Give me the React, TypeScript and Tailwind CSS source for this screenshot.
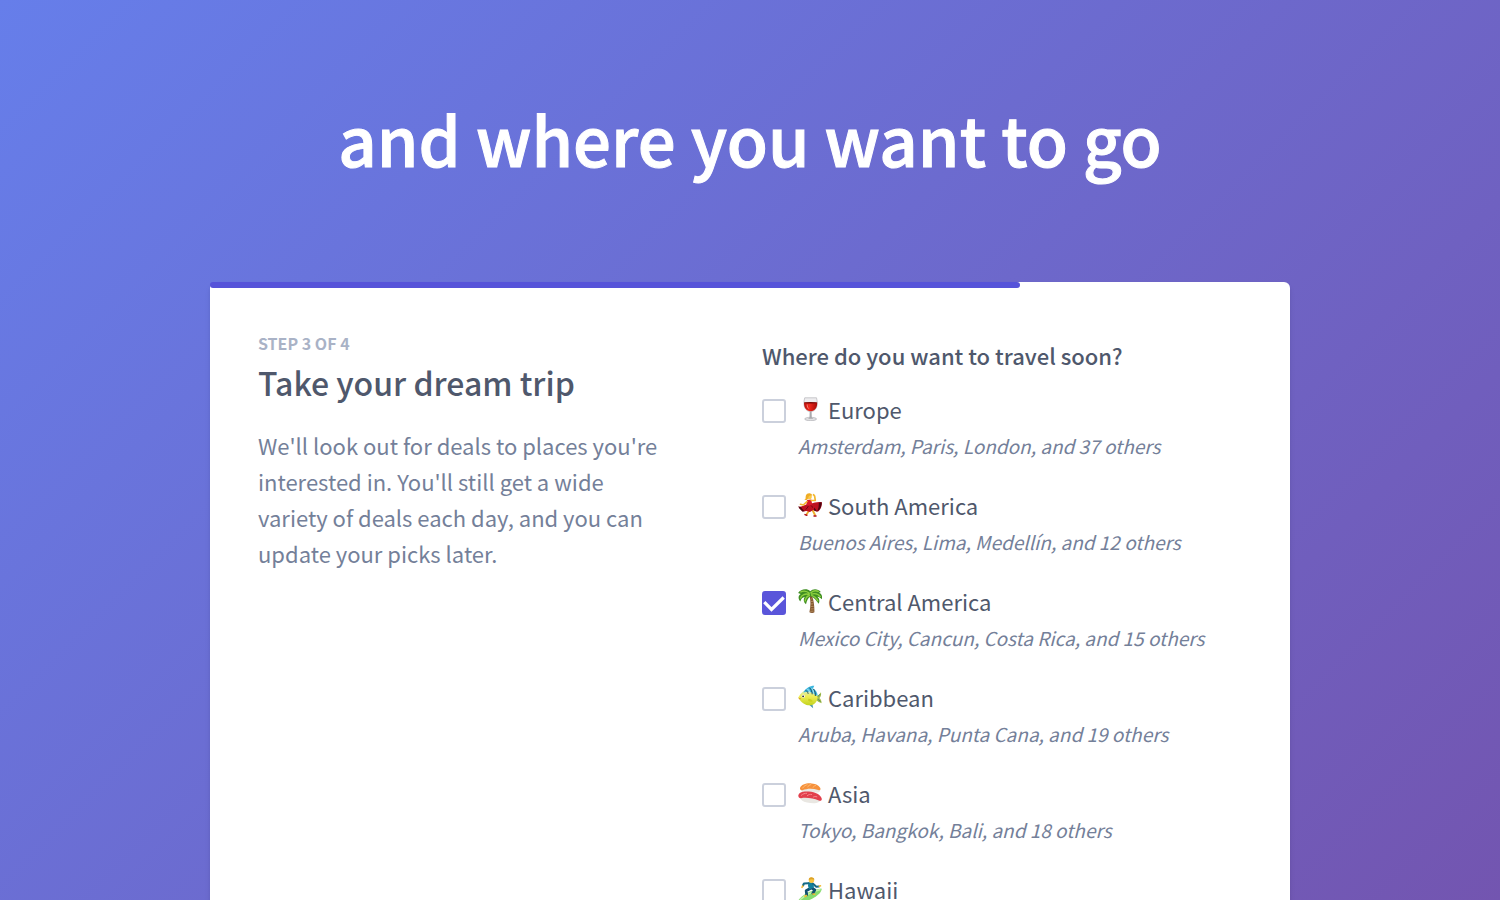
import { useState } from "react";
import type { ReactNode } from "react";

const icon = "h-6 w-6 shrink-0";

function Wine() {
  return (
    <svg className={icon} viewBox="0 0 24 24" aria-hidden="true">
      <defs>
        <linearGradient id="wine" x1="0" x2="1">
          <stop offset="0" stopColor="#b5110d" />
          <stop offset=".4" stopColor="#f0281c" />
          <stop offset="1" stopColor="#a50b08" />
        </linearGradient>
      </defs>
      <ellipse cx="12.600" cy="22" rx="6" ry="1.700" fill="#e0e0e2" stroke="#aaaaae" strokeWidth=".6" />
      <path d="M11.700 14h1.900l.2 6.500 1.700 1.200H10l1.500-1.200z" fill="#a9a9ad" />
      <path d="M6.700.8h11.800c1.100 4 1 7.700-.1 9.900-1.100 2.300-3.200 3.900-5.800 3.900s-4.700-1.600-5.800-3.900C5.700 8.500 5.700 4.800 6.700.8z" fill="#eeedef" stroke="#b4b4b9" strokeWidth=".7" />
      <path d="M6 5.600h13.200c.2 5.200-2.300 8.700-6.600 8.700S5.800 10.800 6 5.600z" fill="url(#wine)" />
      <ellipse cx="12.600" cy="5.700" rx="6.500" ry=".8" fill="#7c0c09" />
      <path d="M9.200 7.500c0 2 .5 3.200 1.500 4.100" stroke="#ff8175" strokeWidth="1" fill="none" />
    </svg>
  );
}

function Dancer() {
  return (
    <svg className={icon} viewBox="0 0 24 24" aria-hidden="true">
      <path d="M11.500 17l-3 4.500M14 16l3 6" stroke="#eeb02e" strokeWidth="1.900" strokeLinecap="round" />
      <path d="M7 21.600l1.800.7M16 23h2" stroke="#b0101d" strokeWidth="1.500" strokeLinecap="round" />
      <path d="M8.300 11.500L13.500 10.500c2.500-1 6.500-2 10.300-1.300.3 3.500-1 7.300-3.700 9.300-2.200.1-3.600-.7-4.900-1.500L12 19l-3.500-1-4 .4C3 17 1.300 15.800.3 13.600c1.700.4 3 .1 4.200-.6z" fill="#bd1020" />
      <path d="M19 18.600c3-1.500 4.700-5.500 4.800-9.400l-3 .5c.2 3.300-.4 6.300-1.800 8.900zM.3 13.600c1 2.200 2.700 3.400 4.200 4.800l2.200-.2c-2-1.500-2.900-2.800-3.700-4.300zM16 14.500c1.300 1 2 2.300 3 3.900l-3-1z" fill="#500511" />
      <path d="M7.500 16.500c1.300-.7 2.200-1.900 2.800-3.400M15 14.500c-.9-.6-1.500-1.200-2.100-2" stroke="#6e0815" strokeWidth="1" fill="none" />
      <path d="M9 6.900l4.300-.4.900 4.700c-1.800 1.500-3.900 1.800-5.900.6z" fill="#d81a2b" />
      <path d="M9 8.500L5.300 12l-2.800-.7M13.300 7.500l4-.2-.7-4.300-1-1.300" stroke="#f3b72f" strokeWidth="1.700" strokeLinecap="round" strokeLinejoin="round" fill="none" />
      <circle cx="11.300" cy="3.700" r="2.500" fill="#fbca45" />
      <path d="M6.300 6.900C8.300 6.300 7.300 4.300 7.900 2.500 8.600.5 10.500 0 12.100.4c1.500.3 2.300 1.300 2.100 2.300-2-.5-3.300 0-3.900 1.700-.3 1.900-1.700 3.100-4 2.500z" fill="#efac25" />
    </svg>
  );
}

function Palm() {
  return (
    <svg className={icon} viewBox="0 0 24 24" aria-hidden="true">
      <path d="M11.500 7c1.300 4.500 1.300 10-.1 16.300 1.300.9 4 .9 5 0 .1-6-.5-11.300-2.300-16.300z" fill="#83562f" />
      <path d="M12.800 10l1.800-.2M13 12.500l2.100-.2M13 15l2.400-.2M12.700 17.500l3-.2M12.500 20l3.300-.2M12.200 22.300l3.500-.2" stroke="#c29a67" strokeWidth=".8" />
      <path d="M12.600 7.200C10.300 8.500 8.900 11.500 8 15.200 5.300 13 5.200 10.300 6.700 8 4.600 8.300 3 9.800 2.300 12.500-.2 9.700.1 6.500 2.700 4.900L.1 4.100C3-.3 9.300-.8 12.200 2.300 14.800-.6 20-.6 22.800 3.100l-1.900.7c2.700 1 3.900 3.500 2.800 6.500-1.200-1.500-2.700-2.300-4.300-2.500 2.100 1.800 2.500 4.100 1.300 7-2.300-3.300-4.500-6.600-8.100-7.600z" fill="#3f8e22" />
      <path d="M11.700 4.500C8.500 1.700 5 1.700 2.300 3.200M11.500 5.500C7.500 4.300 3.500 5.500 2.300 9.500M11.900 6.300C8.700 7 7.500 9.300 7 12.500M12.500 4.200c2.200-2.600 5.200-3.200 8.200-1.500M13 5.300c3.600-1.600 7.500-.3 9.500 2.700M13.300 6.300c3.500 1 5.500 3.300 6.700 6" stroke="#8fd03f" strokeWidth="1.400" fill="none" />
    </svg>
  );
}

function Fish() {
  return (
    <svg className={icon} viewBox="0 0 24 24" aria-hidden="true">
      <defs>
        <linearGradient id="fish" x1="0" y1="0" x2="0" y2="1">
          <stop offset="0" stopColor="#d4eadb" />
          <stop offset=".45" stopColor="#efee52" />
          <stop offset="1" stopColor="#c3d320" />
        </linearGradient>
      </defs>
      <path d="M17.500 11.500c2.300-.6 4-2 5.500-4.300.4 2.600-.2 4.500-1.600 5.800 1.500 1.200 2.200 2.800 2.200 5.300-2.300-.8-4.500-2.200-6.200-4z" fill="#a5bd47" />
      <path d="M19 12.300l3.300-3.300M19 13.500l3.500 3" stroke="#397b78" strokeWidth=".8" />
      <path d="M9.500 18.500l5.700 4.700-.8-4z" fill="#4b98aa" />
      <path d="M.2 12.700C3 7 7.500 3.700 12.300 4.200c4.300.6 7.200 4.200 7.400 8.700-.8 4.500-3.800 7.200-8 7.400-4.500 0-8-2.400-11.500-7.600z" fill="url(#fish)" />
      <path d="M5.300 7.500C8 3 11.500.7 16.300.7L15 3.500c2.900 1.500 4.500 4 4.700 7.500l-2.800-1.200c-3-3-7-3.700-11.600-2.300z" fill="#3db7df" />
      <path d="M7.500 5.300c1.500.5 2.300 2 2.700 3.500M11.500 2.700c1.800 2 2.600 4.200 2.700 6.600M15.500 4c1.600 2.300 2.200 4.700 1.800 7" stroke="#20505f" strokeWidth="1" fill="none" />
      <path d="M9.500 4c1.200 1 2 2.200 2.500 4M13.800 3.200c1.200 1.700 1.700 3.500 1.900 5.500" stroke="#b9e8ee" strokeWidth="1" fill="none" />
      <path d="M10.500 13.800c2.100 0 3.500 1 4.200 2.800-2 .6-3.700.1-4.700-1.200" fill="#cbd11f" />
      <circle cx="5.300" cy="11.200" r="1.600" fill="#f4f4ee" />
      <circle cx="5.100" cy="11.300" r=".9" fill="#222" />
      <path d="M.2 12.700l3 .9-1.300 1z" fill="#dc8b2c" />
    </svg>
  );
}

function Sushi() {
  return (
    <svg className={icon} viewBox="0 0 24 24" aria-hidden="true">
      <path d="M3 8c.3 2.500 1.300 3.700 3 3.800l14-.4c1.900-.4 2.600-1.700 2.200-4z" fill="#e9e7e3" />
      <path d="M2 7C3.300 3.600 8 2 13.500 2.400c4.800.4 8.500 2.500 9 5.400.1 1.200-.8 1.700-2.300 1.200C15 7.200 9.500 7.100 4.500 9.200 2.800 9.600 1.700 8.500 2 7z" fill="#f6913c" />
      <path d="M4.500 7.300C6 4.800 8 3.900 9.500 3.700M9.500 6.300c.7-1.500 2-2.500 3.700-2.700M15 6.600c.5-1.300 1.600-2 2.900-2.100" stroke="#ffbe76" strokeWidth="1" fill="none" />
      <path d="M2 15.500c.3 3.300 2.700 5.300 7 6 5 1 9 1.200 12-.6 1.600-1 2-2.400 1.500-3.800z" fill="#e9e7e2" />
      <path d="M.3 14.600C.8 11.300 5.300 10 10.800 10.600c6.700.6 12 3.200 13 7.200.1 1.900-1.200 2.500-3 1.700-5.400-1.900-11.600-3.300-17.800-2.300-1.700.1-2.800-1-2.700-2.600z" fill="#e2404d" />
      <path d="M3 14.600c2-1.900 4-2.400 6-2.300M9 15c1.400-1.500 3-1.800 5-1.500M15 16.300c1-.8 2.500-1 4.200-.4" stroke="#f7868b" strokeWidth="1" fill="none" />
    </svg>
  );
}

function Surfer() {
  return (
    <svg className={icon} viewBox="0 0 24 24" aria-hidden="true">
      <path d="M.4 23.300C3 18.300 15 12.300 23.500 11.500c1 3.500-5.300 8.500-11.500 11.200-4.600 2-9.200 2.400-11.600.6z" fill="#86db70" />
      <path d="M2 22.800C7 18.500 15 14.300 22.500 12.500" stroke="#c3f3a8" strokeWidth="1.400" fill="none" />
      <path d="M13 11l-4.800 2.800.5 4M13 10.500l3.800 2.500-2 3.300" stroke="#125170" strokeWidth="2.800" strokeLinejoin="round" strokeLinecap="round" fill="none" />
      <path d="M10.300 5.200l4.600.3 1.200 5-4.800 1.900-1.300-3.400z" fill="#12809a" />
      <path d="M10.500 6.300L6 6.500 5 8.500M15 6.700l3.300 3 2.500-.2" stroke="#146985" strokeWidth="2.100" strokeLinecap="round" strokeLinejoin="round" fill="none" />
      <path d="M4.700 9l-.7 1.300M21.300 9.300l1.200-.5M8.500 18.500l-1.600 1M14.800 17l2 .2" stroke="#f6bc35" strokeWidth="1.600" strokeLinecap="round" />
      <circle cx="13.500" cy="3.300" r="2.700" fill="#f9c642" />
      <path d="M10.800 3.100C10.600 1 12.100 0 14.100.5c1.600.2 2.400 1.200 2.200 2.300-1.400-.7-2.700-.7-3.800-.3z" fill="#dca22a" />
    </svg>
  );
}

type Region = { id: string; name: string; icon: ReactNode; places?: string };

const regions: Region[] = [
  { id: "europe", name: "Europe", icon: <Wine />, places: "Amsterdam, Paris, London, and 37 others" },
  { id: "south-america", name: "South America", icon: <Dancer />, places: "Buenos Aires, Lima, Medellín, and 12 others" },
  { id: "central-america", name: "Central America", icon: <Palm />, places: "Mexico City, Cancun, Costa Rica, and 15 others" },
  { id: "caribbean", name: "Caribbean", icon: <Fish />, places: "Aruba, Havana, Punta Cana, and 19 others" },
  { id: "asia", name: "Asia", icon: <Sushi />, places: "Tokyo, Bangkok, Bali, and 18 others" },
  { id: "hawaii", name: "Hawaii", icon: <Surfer /> },
];

function RegionOption({ region, checked, onToggle }: { region: Region; checked: boolean; onToggle: () => void }) {
  return (
    <li className="flex items-start gap-3">
      <span className="grid h-9 shrink-0 place-items-center">
        <input
          id={region.id}
          type="checkbox"
          checked={checked}
          onChange={onToggle}
          className="col-start-1 row-start-1 h-6 w-6 appearance-none rounded-[3px] border-2 border-[#cbd0dc] bg-white checked:border-[#5a55da] checked:bg-[#5a55da]"
        />
        {checked && (
          <svg className="pointer-events-none col-start-1 row-start-1 h-6 w-6" viewBox="0 0 24 24" fill="none" aria-hidden="true">
            <path d="M2.300 11.200l7.200 7.200L21.700 6.500" stroke="white" strokeWidth="3.200" />
          </svg>
        )}
      </span>
      <label htmlFor={region.id} className="block">
        <span className="flex h-9 items-start gap-[6px] text-[22px] leading-8 text-[#4f586c]">
          <span className="pt-1">{region.icon}</span>
          {region.name}
        </span>
        {region.places && (
          <span className="block text-[19px] leading-[34px] text-[#748099] italic">{region.places}</span>
        )}
      </label>
    </li>
  );
}

export default function App() {
  const [selected, setSelected] = useState<string[]>(["central-america"]);
  const toggle = (id: string) =>
    setSelected((current) => (current.includes(id) ? current.filter((item) => item !== id) : [...current, id]));

  return (
    <main className="min-h-[165vh] bg-[linear-gradient(135deg,#667eea_0%,#764ba2_100%)] px-6 pt-24 pb-24 font-['Noto_Sans_CJK_SC','Noto_Sans',sans-serif]">
      <h1 className="text-center text-[67px] leading-[84px] font-medium text-white [-webkit-text-stroke:1px_white]">
        and where you want to go
      </h1>
      <section className="mx-auto mt-[102px] max-w-[1080px] rounded-md bg-white shadow-md">
        <div className="h-[6px] w-3/4 rounded-full bg-[#5653d9]" />
        <div className="grid grid-cols-2 gap-6 px-12 pt-[42px] pb-12">
          <div className="pr-20">
            <p className="text-base leading-[26px] font-bold text-[#a9b2c6] uppercase">Step 3 of 4</p>
            <h2 className="text-[32px] leading-[52px] font-medium text-[#4f586c]">Take your dream trip</h2>
            <p className="mt-[19px] text-[22px] leading-9 text-[#748099]">
              We'll look out for deals to places you're interested in. You'll still get a wide variety of deals each day, and you can update your picks later.
            </p>
          </div>
          <fieldset className="mt-[7px]">
            <legend className="text-[22px] leading-9 font-medium text-[#4f586c]">Where do you want to travel soon?</legend>
            <ul className="mt-5 space-y-[26px]">
              {regions.map((region) => (
                <RegionOption
                  key={region.id}
                  region={region}
                  checked={selected.includes(region.id)}
                  onToggle={() => toggle(region.id)}
                />
              ))}
            </ul>
          </fieldset>
        </div>
      </section>
    </main>
  );
}
